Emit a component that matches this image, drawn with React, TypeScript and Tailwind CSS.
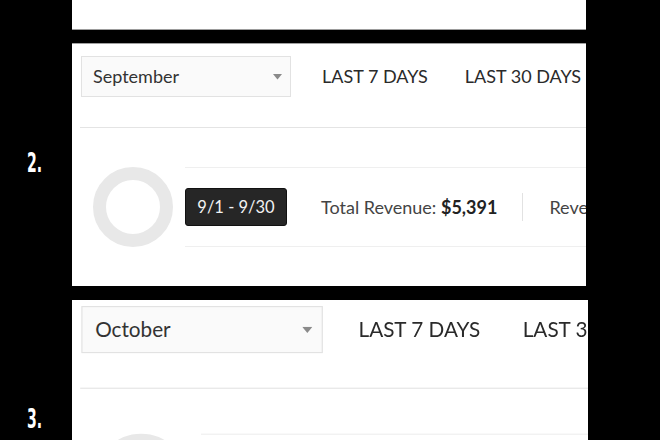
const font = { fontFamily: '"Lato", "Liberation Sans", sans-serif' };

function Caret() {
  return (
    <svg width="9" height="6" viewBox="0 0 9 6" className="shrink-0">
      <path d="M0 0 H9 L4.5 5.5 Z" fill="#8a8a8a" />
    </svg>
  );
}

function StatsPanel({ month }: { month: string }) {
  return (
    <div className="w-[514px] text-[#333]" style={font}>
      {/* Filter bar */}
      <div className="flex items-center pl-[9px]">
        <div className="flex h-[41px] w-[210px] items-center justify-between border border-[#e2e2e2] bg-[#fafafa] pl-[11px] pr-[8px]">
          <span className="text-[18px]">{month}</span>
          <Caret />
        </div>
        <span className="ml-[31px] whitespace-nowrap text-[18px] text-[#2a2a2a]">LAST 7 DAYS</span>
        <span className="ml-[37px] whitespace-nowrap text-[18px] text-[#2a2a2a]">LAST 30 DAYS</span>
      </div>

      <div className="ml-[8px] mt-[30px] border-t border-[#e4e4e4]" />

      {/* Summary row */}
      <div className="mt-[39px] flex pl-[21px]">
        <div className="h-[80px] w-[80px] shrink-0 rounded-full border-[13px] border-[#e8e8e8]" />
        <div className="ml-[12px] flex h-[80px] flex-1 items-center overflow-hidden whitespace-nowrap border-y border-[#efefef]">
          <div className="flex h-[38px] w-[102px] shrink-0 items-center justify-center rounded-[3px] border border-[#111] bg-[#262626] text-[16.5px] text-[#f2f2f2]">
            9/1 - 9/30
          </div>
          <span className="ml-[34px] text-[18px] text-[#444]">
            Total Revenue: <span className="font-bold text-[#222]">$5,391</span>
          </span>
          <div className="ml-[25px] h-[28px] border-l border-[#e2e2e2]" />
          <span className="ml-[26px] text-[18px] text-[#444]">Revenue</span>
        </div>
      </div>
    </div>
  );
}

function StepLabel({ n, top }: { n: string; top: string }) {
  return (
    <div className={`w-[72px] shrink-0 pl-[27px] ${top}`}>
      <span
        className="inline-block origin-left scale-x-[0.6] text-[26px] font-bold leading-none text-white"
        style={{ fontFamily: '"DejaVu Sans Condensed", "DejaVu Sans", sans-serif' }}
      >
        {n}
      </span>
    </div>
  );
}

export default function App() {
  return (
    <div className="h-[440px] w-[660px] overflow-hidden bg-black">
      <div className="flex">
        <div className="w-[72px] shrink-0" />
        <div className="h-[30px] w-[514px] border-b border-[#9c9c9c] bg-white" />
      </div>

      <div className="mt-[13px] flex">
        <StepLabel n="2." top="pt-[107px]" />
        <div className="h-[243px] w-[514px] overflow-hidden border-t border-[#a0a0a0] bg-white pt-[12px]">
          <StatsPanel month="September" />
        </div>
      </div>

      <div className="mt-[14px] flex">
        <StepLabel n="3." top="pt-[106px]" />
        <div className="h-[160px] w-[516px] overflow-hidden bg-white pt-[6px]">
          <div className="-ml-[1px] origin-top-left scale-[1.15]">
            <StatsPanel month="October" />
          </div>
        </div>
      </div>
    </div>
  );
}
